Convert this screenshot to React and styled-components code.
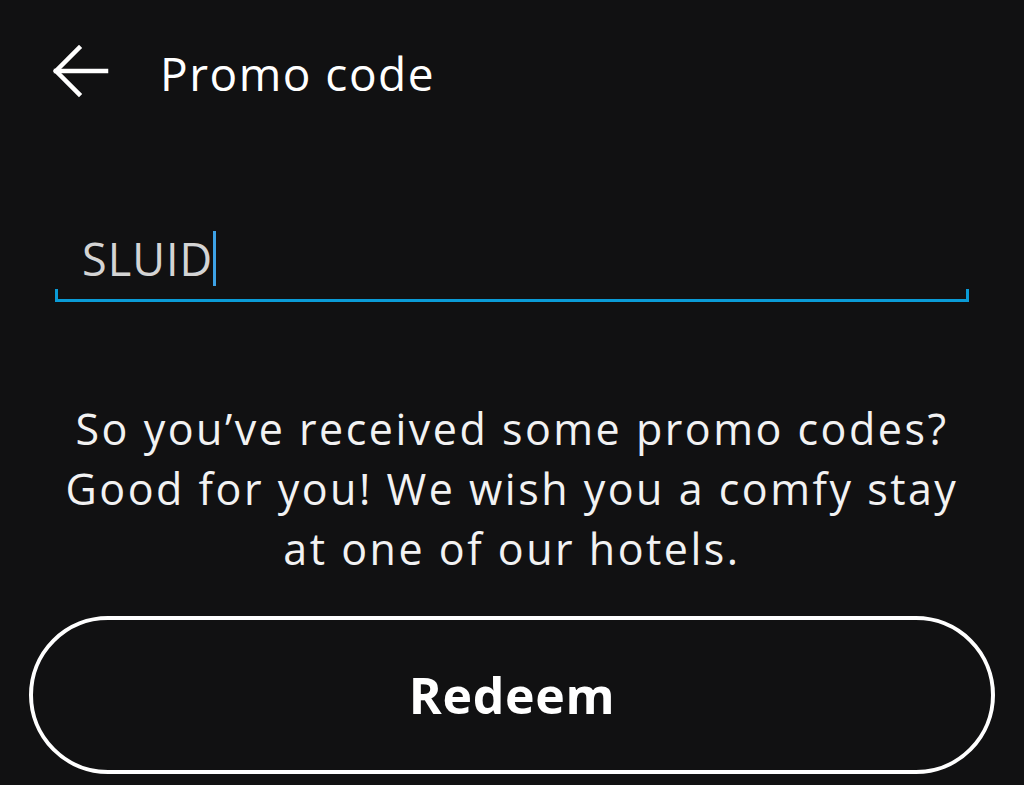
import React from "react";
import styled, { createGlobalStyle } from "styled-components";

const FONT = `"Open Sans", Lato, sans-serif`;

const Global = createGlobalStyle`
  html, body { margin: 0; padding: 0; background: #111112; }
  body { font-family: ${FONT}; -webkit-font-smoothing: antialiased; }
  * { box-sizing: border-box; }
`;

const Screen = styled.div`
  width: 1024px;
  height: 785px;
  background: #111112;
  color: #ffffff;
  display: flex;
  flex-direction: column;
  overflow: hidden;
`;

const Header = styled.header`
  height: 150px;
  display: flex;
  align-items: flex-start;
  padding: 44px 0 0 52px;
  gap: 50px;
`;

const BackButton = styled.button`
  background: none;
  border: 0;
  padding: 0;
  width: 58px;
  height: 58px;
  color: #fff;
  display: flex;
  align-items: center;
  justify-content: center;
  cursor: pointer;
`;

const Title = styled.h1`
  margin: 0;
  font-size: 46px;
  font-weight: 400;
  line-height: 58px;
  letter-spacing: 1.5px;
`;

const Field = styled.div`
  margin: 78px 55px 0 55px;
  position: relative;
  height: 74px;
  display: flex;
  align-items: flex-start;
  padding: 3px 0 0 27px;
`;

const Value = styled.span`
  font-size: 45px;
  line-height: 55px;
  color: #d4d4d4;
  letter-spacing: 1px;
`;

const Caret = styled.span`
  display: inline-block;
  width: 3px;
  height: 55px;
  background: #3da2e6;
  margin-left: 0;
`;

const Underline = styled.div`
  position: absolute;
  left: 0;
  right: 0;
  bottom: 0;
  height: 13px;
  border: 3px solid #0a9bd6;
  border-top: 0;
`;

const Message = styled.p`
  margin: 97px 0 0;
  text-align: center;
  font-size: 43px;
  line-height: 60px;
  font-weight: 400;
  letter-spacing: 2.5px;
  color: #f2f2f2;
  white-space: nowrap;
`;

const RedeemButton = styled.button`
  margin: 37px 29px 0 29px;
  height: 158px;
  border: 4px solid #ffffff;
  border-radius: 80px;
  background: transparent;
  color: #ffffff;
  font-family: ${FONT};
  font-size: 50px;
  font-weight: 700;
  letter-spacing: 0.7px;
  display: flex;
  align-items: center;
  justify-content: center;
  flex-shrink: 0;
`;

export default function App() {
  return (
    <>
      <Global />
      <Screen>
        <Header>
          <BackButton aria-label="Back">
            <svg width="58" height="58" viewBox="0 0 58 58" fill="none" stroke="#fff" strokeWidth="4.5" strokeLinecap="square">
              <path d="M4 27 H54" />
              <path d="M27 4 L4 27 L27 50" />
            </svg>
          </BackButton>
          <Title>Promo code</Title>
        </Header>
        <Field>
          <Value>SLUID</Value>
          <Caret />
          <Underline />
        </Field>
        <Message>
          So you’ve received some promo codes?
          <br />
          Good for you! We wish you a comfy stay
          <br />
          at one of our hotels.
        </Message>
        <RedeemButton>Redeem</RedeemButton>
      </Screen>
    </>
  );
}
